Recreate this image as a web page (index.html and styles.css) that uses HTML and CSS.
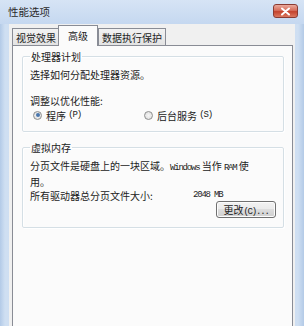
FILE: index.html
```html
<!DOCTYPE html>
<html lang="zh-CN">
<head>
<meta charset="utf-8">
<title>性能选项</title>
<link rel="stylesheet" href="styles.css">
</head>
<body>
<div class="window">
  <div class="titlebar">
    <span class="title">性能选项</span>
    <div class="close">
      <svg width="11" height="9" viewBox="0 0 11 9"><path d="M2 1.5 L9 7.5 M9 1.5 L2 7.5" stroke="#fff" stroke-width="2" stroke-linecap="round"/></svg>
    </div>
  </div>
  <div class="client">
    <div class="tabs">
      <div class="tab">视觉效果</div>
      <div class="tab active">高级</div>
      <div class="tab">数据执行保护</div>
    </div>
    <div class="panel">
      <fieldset class="group">
        <legend>处理器计划</legend>
        <p class="line">选择如何分配处理器资源。</p>
        <p class="line sub">调整以优化性能:</p>
        <div class="radios">
          <label class="radio first"><span class="dot on"></span>程序 <span class="latin">(P)</span></label>
          <label class="radio"><span class="dot"></span>后台服务 <span class="latin">(S)</span></label>
        </div>
      </fieldset>
      <fieldset class="group">
        <legend>虚拟内存</legend>
        <p class="line nowrap">分页文件是硬盘上的一块区域。<span class="latin">Windows</span> 当作 <span class="latin">RAM</span> 使</p>
        <p class="line">用。</p>
        <div class="size-row"><span class="label">所有驱动器总分页文件大小:</span><span class="value latin">2048 MB</span></div>
        <div class="btn-row"><button class="btn">更改<span class="latin">(C)...</span></button></div>
      </fieldset>
    </div>
  </div>
</div>
</body>
</html>
```

FILE: styles.css
```css
* { box-sizing: border-box; }
html, body { margin: 0; padding: 0; }
body {
  width: 304px;
  height: 326px;
  overflow: hidden;
  font-family: "Noto Sans CJK SC", "Liberation Sans", sans-serif;
  font-size: 10px;
  color: #222;
}
.window {
  width: 304px;
  height: 326px;
  display: flex;
  flex-direction: column;
  background: linear-gradient(90deg, #b3cae7 0px, #cfdff2 5px, #c8dbf1 50%, #cfdff2 298px, #b3cae7 304px);
}
.titlebar {
  height: 24px;
  display: flex;
  align-items: center;
  justify-content: space-between;
  padding: 0 6px 2px 8px;
  background: linear-gradient(180deg, #d6e4f5 0%, #c5d8f0 100%);
}
.title {
  font-size: 10.5px;
  color: #2a2a2a;
}
.close {
  width: 25px;
  height: 14px;
  border: 1px solid #8a3b33;
  border-radius: 3px;
  background: linear-gradient(180deg, #eaa99c 0%, #d66e5c 45%, #c4432d 55%, #db7860 100%);
  display: flex;
  align-items: center;
  justify-content: center;
}
.client {
  flex: 1;
  margin: 0 9px 0 9px;
  background: #f0f0f0;
  padding: 1px 2px 0 3px;
  display: flex;
  flex-direction: column;
}
.tabs {
  display: flex;
  align-items: flex-end;
  height: 20px;
  position: relative;
  z-index: 1;
}
.tab {
  height: 17px;
  padding: 0 3px;
  border: 1px solid #898c95;
  border-bottom: none;
  background: linear-gradient(180deg, #f2f2f2 0%, #e3e3e3 100%);
  display: flex;
  align-items: center;
  margin-right: -1px;
}
.tab.active {
  background: #fbfbfb;
  padding: 2px 9px 0 9px;
  margin: 0 0 -1px -1px;
  height: 21px;
  align-items: flex-start;
}
.panel {
  flex: 1;
  border: 1px solid #898c95;
  border-bottom: none;
  background: #fbfbfb;
  padding: 4px 8px 0 9px;
}
.group {
  margin: 0 0 9px 0;
  padding: 5px 0 9px 7px;
  border: 1px solid #d5dfe5;
  border-radius: 2px;
  box-shadow: inset 1px 1px 0 #fff, 1px 1px 0 #fff;
}
.group legend {
  padding: 0 1px;
  line-height: 13px;
}
.line {
  margin: 0;
  line-height: 13px;
}
.nowrap { white-space: nowrap; }
.sub { margin-top: 13px; }
.latin {
  font-family: "Liberation Mono", monospace;
  font-size: 9px;
  letter-spacing: -1.2px;
}
.radios {
  display: flex;
  margin-top: 1px;
  height: 14px;
  align-items: center;
}
.radio {
  display: flex;
  align-items: center;
  white-space: pre;
}
.radio.first { width: 111px; }
.dot {
  width: 9px;
  height: 9px;
  border-radius: 50%;
  border: 1px solid #8e8f8f;
  background: radial-gradient(circle, #f6f6f6 0%, #dadada 100%);
  margin: 0 4px 0 3px;
  position: relative;
}
.dot.on::after {
  content: "";
  position: absolute;
  left: 1.5px;
  top: 1.5px;
  width: 4px;
  height: 4px;
  border-radius: 50%;
  background: #4a76ad;
}
.size-row {
  display: flex;
  margin-top: 1px;
  line-height: 13px;
}
.label { width: 163px; }
.btn-row {
  display: flex;
  justify-content: flex-end;
  padding-right: 7px;
  margin-top: -1px;
}
.btn {
  font-family: inherit;
  font-size: 10px;
  height: 17px;
  width: 60px;
  padding: 0;
  border: 1px solid #707070;
  border-radius: 3px;
  background: linear-gradient(180deg, #f2f2f2 0%, #ebebeb 45%, #dddddd 50%, #cfcfcf 100%);
  color: #222;
  box-shadow: inset 0 0 0 1px #fcfcfc;
}
```
